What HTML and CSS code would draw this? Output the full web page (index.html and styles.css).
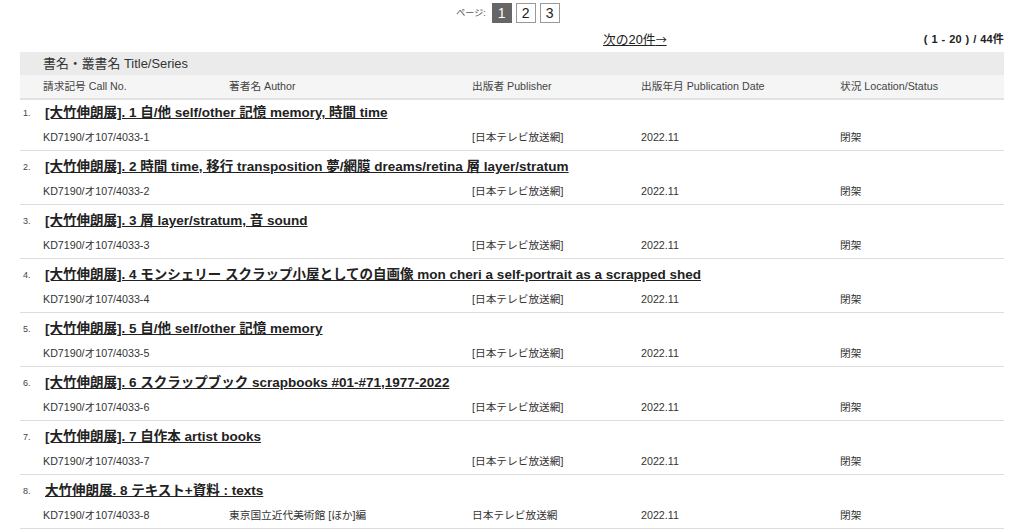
FILE: index.html
```html
<!doctype html>
<html>
  <head>
    <title>検索結果</title>
    <link rel="stylesheet" href="styles.css">
  </head>
  <body>
    <div class="results">
      <div class="pager">
        <span class="pager-label">ページ:</span>
        <span class="page current">1</span>
        <a class="page" href="#">2</a>
        <a class="page" href="#">3</a>
      </div>
      <div class="nav">
        <span class="nav-spacer"></span>
        <a class="next" href="#">次の20件<span class="arrow">→</span></a>
        <span class="count">( 1 - 20 ) / 44件</span>
      </div>
      <div class="head-title">書名・叢書名 Title/Series</div>
      <div class="head-cols cols">
        <span>請求記号 Call No.</span>
        <span>著者名 Author</span>
        <span>出版者 Publisher</span>
        <span>出版年月 Publication Date</span>
        <span>状況 Location/Status</span>
      </div>
      <ol class="items">
        <li class="item first">
          <div class="title"><span class="num">1.</span><a href="#">[大竹伸朗展]. 1 自/他 self/other 記憶 memory, 時間 time</a></div>
          <div class="cols"><span>KD7190/オ107/4033-1</span><span></span><span>[日本テレビ放送網]</span><span>2022.11</span><span>閉架</span></div>
        </li>
        <li class="item">
          <div class="title"><span class="num">2.</span><a href="#">[大竹伸朗展]. 2 時間 time, 移行 transposition 夢/網膜 dreams/retina 層 layer/stratum</a></div>
          <div class="cols"><span>KD7190/オ107/4033-2</span><span></span><span>[日本テレビ放送網]</span><span>2022.11</span><span>閉架</span></div>
        </li>
        <li class="item">
          <div class="title"><span class="num">3.</span><a href="#">[大竹伸朗展]. 3 層 layer/stratum, 音 sound</a></div>
          <div class="cols"><span>KD7190/オ107/4033-3</span><span></span><span>[日本テレビ放送網]</span><span>2022.11</span><span>閉架</span></div>
        </li>
        <li class="item">
          <div class="title"><span class="num">4.</span><a href="#">[大竹伸朗展]. 4 モンシェリー スクラップ小屋としての自画像 mon cheri a self-portrait as a scrapped shed</a></div>
          <div class="cols"><span>KD7190/オ107/4033-4</span><span></span><span>[日本テレビ放送網]</span><span>2022.11</span><span>閉架</span></div>
        </li>
        <li class="item">
          <div class="title"><span class="num">5.</span><a href="#">[大竹伸朗展]. 5 自/他 self/other 記憶 memory</a></div>
          <div class="cols"><span>KD7190/オ107/4033-5</span><span></span><span>[日本テレビ放送網]</span><span>2022.11</span><span>閉架</span></div>
        </li>
        <li class="item">
          <div class="title"><span class="num">6.</span><a href="#">[大竹伸朗展]. 6 スクラップブック scrapbooks #01-#71,1977-2022</a></div>
          <div class="cols"><span>KD7190/オ107/4033-6</span><span></span><span>[日本テレビ放送網]</span><span>2022.11</span><span>閉架</span></div>
        </li>
        <li class="item">
          <div class="title"><span class="num">7.</span><a href="#">[大竹伸朗展]. 7 自作本 artist books</a></div>
          <div class="cols"><span>KD7190/オ107/4033-7</span><span></span><span>[日本テレビ放送網]</span><span>2022.11</span><span>閉架</span></div>
        </li>
        <li class="item">
          <div class="title"><span class="num">8.</span><a href="#">大竹伸朗展. 8 テキスト+資料 : texts</a></div>
          <div class="cols"><span>KD7190/オ107/4033-8</span><span>東京国立近代美術館 [ほか]編</span><span>日本テレビ放送網</span><span>2022.11</span><span>閉架</span></div>
        </li>
      </ol>
    </div>
  </body>
</html>
```
FILE: styles.css
```css
html, body {
  margin: 0;
  background: #fff;
  color: #333;
  font-family: "Liberation Sans", "Noto Sans CJK JP", sans-serif;
}
.results {
  padding: 0 20px;
}
.pager {
  display: flex;
  justify-content: center;
  align-items: center;
  gap: 4px;
  padding: 2px 0 0 0;
  margin-left: -8px;
  height: 21px;
}
.pager-label {
  font-size: 9px;
  color: #555;
  margin-right: 2px;
}
.page {
  box-sizing: border-box;
  width: 20px;
  height: 20px;
  border: 1px solid #999;
  font-size: 14px;
  line-height: 18px;
  text-align: center;
  color: #222;
  text-decoration: none;
}
.page.current {
  background: #666;
  border-color: #666;
  color: #fff;
}
.nav {
  display: flex;
  align-items: center;
  height: 28px;
  margin-top: 1px;
}
.nav-spacer {
  width: 583px;
}
.next {
  font-size: 12.8px;
  color: #222;
}
.arrow {
  font-family: "Noto Sans CJK JP", sans-serif;
  font-size: 11px;
}
.count {
  margin-left: auto;
  font-size: 11px;
  font-weight: bold;
  color: #222;
  word-spacing: 0.5px;
  letter-spacing: 0.2px;
}
.head-title {
  background: #ebebeb;
  height: 23px;
  line-height: 23px;
  padding-left: 23px;
  font-size: 12.9px;
  color: #333;
}
.cols {
  display: grid;
  grid-template-columns: 186px 243px 169px 199px 1fr;
  padding-left: 23px;
  font-size: 10.7px;
  color: #333;
}
.head-cols {
  background: #f5f5f5;
  height: 23px;
  line-height: 23px;
  border-bottom: 2px solid #e2e2e2;
  color: #444;
}
.items {
  list-style: none;
  margin: 0;
  padding: 0;
}
.item {
  border-bottom: 1px solid #ddd;
}
.title {
  display: flex;
  align-items: center;
  height: 20px;
  padding: 6px 0 3px 0;
  line-height: 20px;
  overflow: hidden;
}
.item.first .title {
  padding-top: 3px;
}
.num {
  width: 25px;
  padding-left: 3px;
  box-sizing: border-box;
  font-size: 9px;
  color: #444;
}
.title a {
  font-size: 13.5px;
  font-weight: bold;
  color: #222;
}
.item .cols {
  line-height: 16px;
  padding-top: 3px;
  padding-bottom: 5px;
}
```
